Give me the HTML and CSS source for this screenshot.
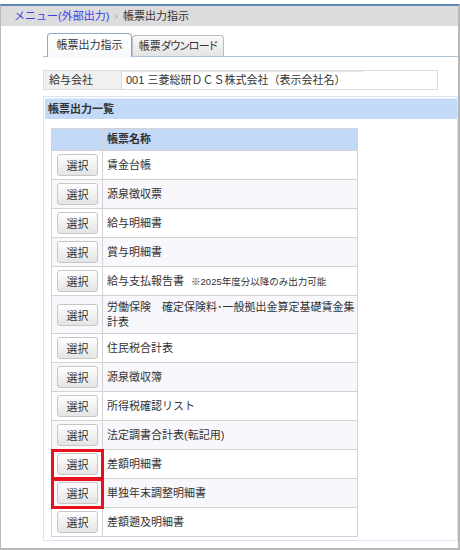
FILE: index.html
```html
<!DOCTYPE html>
<html lang="ja">
<head>
<meta charset="utf-8">
<title>帳票出力指示</title>
<link rel="stylesheet" href="styles.css">
</head>
<body>
<div class="frame">
  <div class="breadcrumb">
    <a class="crumb-link" href="#">メニュー(外部出力)</a>
    <span class="crumb-sep">›</span>
    <span class="crumb-current">帳票出力指示</span>
  </div>
  <div class="content">
    <div class="tabs">
      <div class="tab tab-active">帳票出力指示</div>
      <div class="tab">帳票<span class="kana">ダウンロード</span></div>
    </div>
    <table class="company">
      <tr>
        <th class="company-label">給与会社</th>
        <td class="company-value"><span class="company-text">001 三菱総研ＤＣＳ株式会社（表示会社名）</span></td>
      </tr>
    </table>
    <div class="panel">
      <div class="panel-title">帳票出力一覧</div>
      <table class="list">
        <tr class="list-head">
          <th class="col-btn"></th>
          <th class="col-name">帳票名称</th>
        </tr>
        <tr><td class="col-btn"><button class="btn">選択</button></td><td class="col-name">賃金台帳</td></tr>
        <tr class="alt"><td class="col-btn"><button class="btn">選択</button></td><td class="col-name">源泉徴収票</td></tr>
        <tr><td class="col-btn"><button class="btn">選択</button></td><td class="col-name">給与明細書</td></tr>
        <tr class="alt"><td class="col-btn"><button class="btn">選択</button></td><td class="col-name">賞与明細書</td></tr>
        <tr><td class="col-btn"><button class="btn">選択</button></td><td class="col-name">給与支払報告書 <span class="note">※2025年度分以降のみ出力可能</span></td></tr>
        <tr class="alt tall"><td class="col-btn"><button class="btn">選択</button></td><td class="col-name">労働保険　確定保険料･一般拠出金算定基礎賃金集計表</td></tr>
        <tr><td class="col-btn"><button class="btn">選択</button></td><td class="col-name">住民税合計表</td></tr>
        <tr class="alt"><td class="col-btn"><button class="btn">選択</button></td><td class="col-name">源泉徴収簿</td></tr>
        <tr><td class="col-btn"><button class="btn">選択</button></td><td class="col-name">所得税確認リスト</td></tr>
        <tr class="alt"><td class="col-btn"><button class="btn">選択</button></td><td class="col-name">法定調書合計表(転記用)</td></tr>
        <tr><td class="col-btn marked"><button class="btn">選択</button></td><td class="col-name">差額明細書</td></tr>
        <tr class="alt"><td class="col-btn marked"><button class="btn">選択</button></td><td class="col-name">単独年末調整明細書</td></tr>
        <tr><td class="col-btn"><button class="btn">選択</button></td><td class="col-name">差額遡及明細書</td></tr>
      </table>
    </div>
  </div>
</div>
</body>
</html>
```

FILE: styles.css
```css
* { box-sizing: border-box; }

html, body {
  margin: 0;
  padding: 0;
  background: #ffffff;
}

body {
  font-family: "Liberation Sans", "Noto Sans CJK JP", sans-serif;
  font-size: 11px;
  color: #333333;
  width: 460px;
  height: 550px;
  overflow: hidden;
}

.frame {
  margin-top: 4px;
  height: 546px;
  border-top: 2px solid #5f86b8;
  border-left: 1px solid #b8b8b8;
  border-right: 2px solid #b8b8b8;
  border-bottom: 2px solid #b8b8b8;
}

.breadcrumb {
  height: 20px;
  line-height: 20px;
  background: #dcdcdc;
  padding-left: 13px;
  display: flex;
  align-items: center;
  gap: 5px;
  font-size: 11px;
}

.crumb-link {
  color: #3b3bf0;
  text-decoration: none;
}

.crumb-sep {
  color: #9aa8b8;
  font-size: 11px;
}

.crumb-current {
  color: #333333;
}

.content {
  padding-left: 42px;
}

.tabs {
  margin-top: 7px;
  height: 24px;
  display: flex;
  align-items: flex-end;
  padding-left: 4px;
  border-bottom: 1px solid #aec2d8;
}

.tab {
  width: 92px;
  height: 21px;
  line-height: 20px;
  text-align: center;
  border: 1px solid #bcbcbc;
  border-bottom: none;
  border-radius: 4px 4px 0 0;
  background: linear-gradient(#fafafa, #e3e3e3);
  font-size: 11px;
  color: #333333;
  white-space: nowrap;
}

.kana {
  font-feature-settings: "palt";
  letter-spacing: -0.6px;
}

.tab-active {
  width: 85px;
  height: 24px;
  line-height: 23px;
  border-color: #8ea9ca;
  background: linear-gradient(#ffffff, #f6f8fb);
  margin-bottom: -1px;
}

.company {
  margin-top: 13px;
  border-collapse: collapse;
}

.company-label {
  width: 78px;
  height: 19px;
  padding: 0 5px;
  text-align: left;
  font-weight: normal;
  background: #f0f0f0;
  border: 1px solid #dcdcdc;
  line-height: 17px;
}

.company-value {
  width: 316px;
  height: 19px;
  padding: 0;
  border: 1px solid #dcdcdc;
  line-height: 17px;
}

.company-text {
  display: inline-block;
  width: 241px;
  padding-left: 4px;
  border-top: 1px solid #e4e4e4;
  line-height: 16px;
}

.panel {
  margin-top: 6px;
  height: 445px;
  border: 1px solid #d9e5f4;
  padding: 1px 0 0 1px;
}

.panel-title {
  height: 21px;
  line-height: 21px;
  background: #c2d9f7;
  padding-left: 3px;
  font-weight: bold;
  border-top: 1px solid #e4eefa;
}

.list {
  margin: 9px 0 0 6px;
  width: 307px;
  border-collapse: collapse;
  border: 1px solid #cfcfcf;
}

.list th,
.list td {
  border: 1px solid #d2d2d2;
  padding: 0;
  vertical-align: middle;
}

.list tr {
  height: 29px;
}

.list .list-head {
  height: 22px;
  background: #c2d9f7;
}

.list th {
  text-align: left;
  font-weight: bold;
}

.list tr.alt {
  background: #f8f8fc;
}

.list tr.tall {
  height: 38px;
}

.col-btn {
  width: 51px;
  text-align: center;
}

.col-name {
  padding: 0 2px 0 4px !important;
  line-height: 15px;
}

.btn {
  width: 41px;
  height: 22px;
  padding: 0;
  border: 1px solid #c6c6c6;
  border-radius: 3px;
  background: linear-gradient(#ffffff, #e4e4e4);
  font-family: "Liberation Sans", "Noto Sans CJK JP", sans-serif;
  font-size: 11px;
  color: #333333;
  display: block;
  margin: 0 0 0 5px;
}

.note {
  font-size: 9.5px;
  margin-left: 4px;
}

.marked {
  outline: 3px solid #e8101c;
  outline-offset: -2px;
}
```
